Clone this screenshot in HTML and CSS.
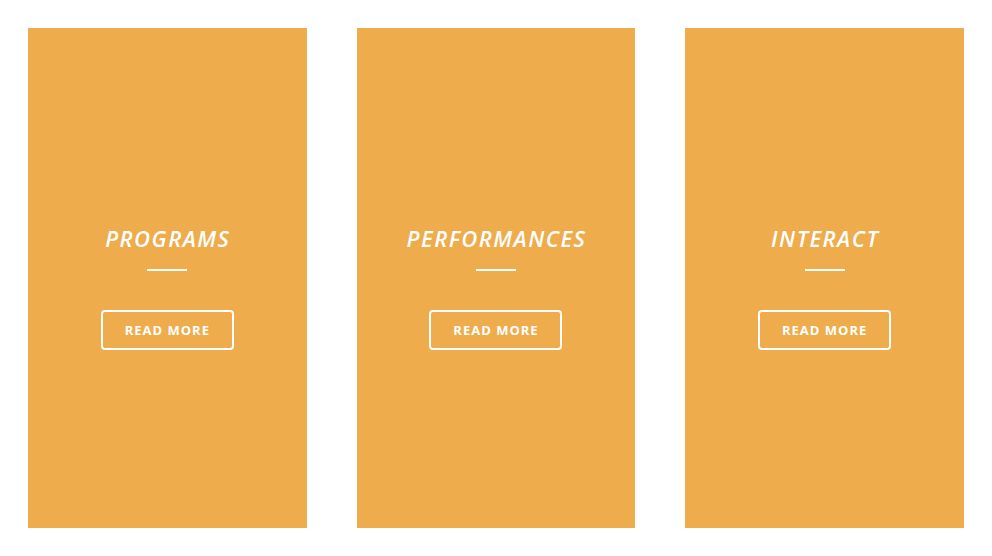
FILE: index.html
```html
<!DOCTYPE html>
<html>
  <head>
    <meta charset="UTF-8" />
    <meta name="viewport" content="width=device-width, initial-scale=1.0" />
    <title>Sections</title>
    <link rel="stylesheet" href="styles.css">
  </head>
  <body>
    <div id="cards">
      <div class="card">
        <h2>Programs</h2>
        <div class="divider"></div>
        <a class="button" href="#">Read More</a>
      </div>
      <div class="card">
        <h2>Performances</h2>
        <div class="divider"></div>
        <a class="button" href="#">Read More</a>
      </div>
      <div class="card">
        <h2>Interact</h2>
        <div class="divider"></div>
        <a class="button" href="#">Read More</a>
      </div>
    </div>
  </body>
</html>
```

FILE: styles.css
```css
body {
  margin: 0;
  background-color: white;
  font-family: 'Open Sans', sans-serif;
}

#cards {
  display: grid;
  grid-template-columns: repeat(3, 1fr);
  gap: 50px;
  padding: 28px;
}

.card {
  height: 500px;
  box-sizing: border-box;
  padding-top: 20px;
  display: flex;
  flex-direction: column;
  align-items: center;
  justify-content: center;
  background-color: #eeac4c;
  color: white;
}

h2 {
  margin: 0;
  padding-left: 1px;
  font-family: 'Open Sans', sans-serif;
  font-style: italic;
  font-weight: 600;
  font-size: 22px;
  line-height: 22px;
  text-transform: uppercase;
  letter-spacing: 1.5px;
}

.divider {
  width: 40px;
  height: 2px;
  margin-top: 20px;
  background-color: white;
}

.button {
  box-sizing: border-box;
  width: 133px;
  height: 40px;
  margin-top: 39px;
  display: flex;
  align-items: center;
  justify-content: center;
  border: 2px solid white;
  border-radius: 4px;
  color: white;
  text-decoration: none;
  text-transform: uppercase;
  font-size: 13px;
  font-weight: 700;
  letter-spacing: 1px;
}
```
